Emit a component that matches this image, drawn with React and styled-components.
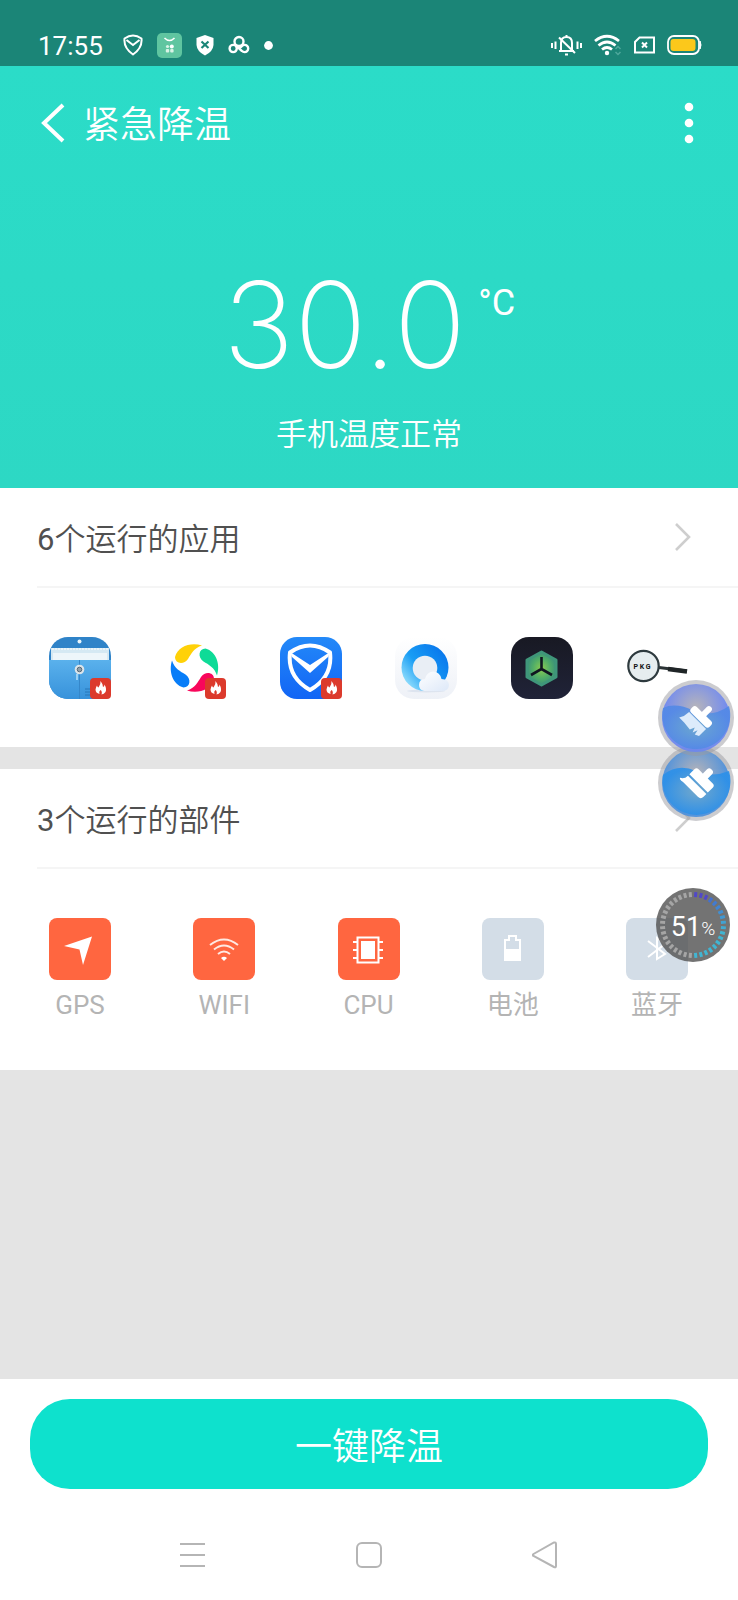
import React from 'react'
import styled, { createGlobalStyle } from 'styled-components'

const colors = {
  teal: '#2bdcc8',
  tealDark: '#2dd8c4',
  status: '#1b8577',
  action: '#0ee1cd',
  orange: '#ff6640',
  idle: '#d3dde7',
  page: '#e4e4e4',
  text: '#505050',
  muted: '#b4b4b4',
};

const GlobalStyle = createGlobalStyle`
  * {
    box-sizing: border-box;
  }

  body {
    margin: 0;
    font-family: Roboto, "Noto Sans CJK SC", sans-serif;
    background: ${colors.page};
  }

  button {
    border: 0;
    padding: 0;
    background: none;
    font-family: inherit;
    cursor: pointer;
  }

  svg {
    display: block;
    flex-shrink: 0;
  }
`;

// Styled components
const Page = styled.div`
  position: relative;
  min-height: 100vh;
  display: flex;
  flex-direction: column;
`;

const StatusBar = styled.div`
  height: 66px;
  padding: 24px 36px 0 38px;
  display: flex;
  align-items: center;
  justify-content: space-between;
  background: ${colors.status};
  color: #fff;
`;

const StatusGroup = styled.div`
  display: flex;
  align-items: center;
  gap: ${props => props.$gap || 12}px;
`;

const Clock = styled.span`
  padding-top: 2px;
  font-size: 26px;
  line-height: 32px;
  margin-right: 6px;
`;

const Hero = styled.header`
  height: 422px;
  display: flex;
  flex-direction: column;
  background: linear-gradient(${colors.teal}, ${colors.tealDark});
  color: #fff;
`;

const TitleBar = styled.div`
  height: 114px;
  padding: 0 40px 0 41px;
  display: flex;
  align-items: center;
  justify-content: space-between;
`;

const BackButton = styled.button`
  display: flex;
  align-items: center;
  gap: 18px;
  color: #fff;
`;

const Title = styled.h1`
  margin: 0;
  padding-top: 6px;
  font-size: 37px;
  line-height: 48px;
  font-weight: 350;
`;

const Reading = styled.div`
  margin-top: 73px;
  display: flex;
  justify-content: center;
  align-items: flex-start;
  gap: 12px;
`;

const Degrees = styled.span`
  font-family: Inter, Roboto, sans-serif;
  font-size: 120px;
  line-height: 144px;
  font-weight: 200;
`;

const Unit = styled.span`
  padding-top: 28px;
  font-size: 36px;
  line-height: 44px;
`;

const Summary = styled.p`
  margin: 18px 0 0;
  text-align: center;
  font-size: 31px;
  line-height: 40px;
  font-weight: 350;
`;

const Section = styled.section`
  background: #fff;
  margin-bottom: 22px;
`;

const SectionHeader = styled.button`
  width: calc(100% - 37px);
  height: 100px;
  margin-left: 37px;
  padding-right: 46px;
  display: flex;
  align-items: center;
  justify-content: space-between;
  border-bottom: 2px solid #f5f5f5;
  color: ${colors.text};
  font-size: 31px;
  font-weight: 350;
`;

const Count = styled.span`
  font-weight: 400;
`;

const SectionTitle = styled.span`
  padding-bottom: 2px;
`;

const IconRow = styled.div`
  display: flex;
  justify-content: space-between;
  padding: 49px 50px ${props => props.$bottom}px 49px;
`;

const AppButton = styled.button`
  position: relative;
  width: 62px;
  height: 62px;
`;

const HotBadge = styled.span`
  position: absolute;
  right: 0;
  bottom: 0;
  width: 21px;
  height: 21px;
  border-radius: 4px;
  background: #dc3a2c;
`;

const PartButton = styled.button`
  width: 62px;
  display: flex;
  flex-direction: column;
  align-items: center;
  gap: 7px;
  color: ${colors.muted};
  font-size: 26px;
  line-height: 36px;
  font-weight: 400;
  white-space: nowrap;
`;

const PartTile = styled.span`
  width: 62px;
  height: 62px;
  border-radius: 8px;
  background: ${props => (props.$active ? colors.orange : colors.idle)};
`;

const Footer = styled.footer`
  margin-top: auto;
  background: #fff;
`;

const ActionArea = styled.div`
  padding: 20px 30px;
`;

const ActionButton = styled.button`
  width: 100%;
  height: 90px;
  border-radius: 40px;
  background: ${colors.action};
  color: #fff;
  font-size: 37px;
  font-weight: 350;
`;

const NavBar = styled.nav`
  height: 91px;
  padding: 0 178px;
  display: flex;
  align-items: center;
  justify-content: space-between;
`;

const Floating = styled.button`
  position: absolute;
  top: ${props => props.$top}px;
  right: ${props => props.$right}px;
  border-radius: 50%;
`;

const Meter = styled(Floating)`
  width: 74px;
  height: 74px;
  padding-top: 3px;
  display: flex;
  align-items: center;
  justify-content: center;
  background: rgba(84, 84, 84, 0.82);
  color: #fff;
  font-size: 27px;
`;

const MeterRing = styled.svg`
  position: absolute;
  inset: 0;
`;

const Percent = styled.small`
  padding-top: 3px;
  font-size: 19px;
  font-weight: 300;
`;

// Status bar icons
const StatusLeft = () => (
  <StatusGroup $gap={14}>
    <Clock>17:55</Clock>
    <svg width="20" height="22" viewBox="0 0 20 22" fill="none" stroke="#fff" strokeWidth="2">
      <path d="M1.5 4.5Q10-1.5 18.5 4.5Q19.5 14 10 20.5Q.5 14 1.5 4.5Z" strokeLinejoin="round" />
      <path d="M3.5 6L10 11L16.5 6" />
    </svg>
    <svg width="25" height="25" viewBox="0 0 25 25">
      <rect width="25" height="25" rx="5" fill="#5fc5a0" />
      <path d="M7.500 5Q12.500 10 17.500 5" fill="none" stroke="#fff" strokeWidth="1.600" />
      <g fill="#d8f3e6">
        <circle cx="10.500" cy="13.500" r="1.600" />
        <circle cx="14.800" cy="13.500" r="2" fill="#fff" />
        <rect x="8.800" y="16" width="3.400" height="3.400" rx="1" />
        <rect x="13.200" y="16" width="3.400" height="3.400" rx="1" />
      </g>
    </svg>
    <svg width="18" height="22" viewBox="0 0 18 22">
      <path d="M9 1L17.500 4V11Q17 17.500 9 21.500Q1 17.500 .5 11V4Z" fill="#fff" />
      <path d="M5.500 7.500L12.500 14M12.500 7.500L5.500 14" stroke={colors.status} strokeWidth="2.200" />
    </svg>
    <svg width="22" height="20" viewBox="0 0 22 20" fill="none" stroke="#fff" strokeWidth="2.400">
      <circle cx="11" cy="6.500" r="4.500" />
      <circle cx="5.200" cy="13.500" r="3.600" />
      <path d="M8 10.500L14 16A3.600 3.600 0 1 0 14 11L11.500 13.500" />
    </svg>
    <svg width="9" height="9" viewBox="0 0 9 9">
      <circle cx="4.500" cy="4.500" r="4.400" fill="#fff" />
    </svg>
  </StatusGroup>
);

const StatusRight = () => (
  <StatusGroup>
    <svg width="31" height="22" viewBox="0 0 31 22" fill="none" stroke="#fff" strokeWidth="2">
      <path d="M1 9V14M4.500 7.500V15M26.500 7.500V15M30 9V14" />
      <path d="M8 17H23M10 17V9Q10 3 15.500 3Q21 3 21 9V17M15.500 1V3M14 20.500H17" />
      <path d="M8 3.500L24 19" />
    </svg>
    <svg width="28" height="22" viewBox="0 0 28 22" fill="none" stroke="#fff" strokeWidth="2.800">
      <path d="M1 7Q13-2.500 25 7" />
      <path d="M4.500 11.500Q13 4.500 21.500 11.500" />
      <path d="M8 15.500Q13 11.500 18 15.500" />
      <circle cx="13" cy="19" r="2.200" fill="#fff" stroke="none" />
      <path d="M21.500 15L24 12.500L26.500 15M21.500 18L24 20.500L26.500 18" stroke="#4ea79b" strokeWidth="1.500" />
    </svg>
    <svg width="21" height="18" viewBox="0 0 21 18" fill="none" stroke="#fff" strokeWidth="2">
      <path d="M5.500 1.500H20V16.500H1V6Z" />
      <path d="M8 6.500L13 11.500M13 6.500L8 11.500" />
    </svg>
    <svg width="35" height="20" viewBox="0 0 35 20">
      <rect x="1" y="1" width="31" height="18" rx="6" fill="none" stroke="#fff" strokeWidth="1.800" />
      <path d="M33 6Q35 10 33 14Z" fill="#fff" stroke="#fff" />
      <rect x="3.500" y="4" width="25" height="12" rx="3" fill="#fcc81b" />
    </svg>
  </StatusGroup>
);

const Chevron = () => (
  <svg width="18" height="30" viewBox="0 0 18 30" fill="none" stroke="#cecece" strokeWidth="2.600">
    <path d="M2 2L15 15L2 28" />
  </svg>
);

const Flame = () => (
  <svg width="21" height="21" viewBox="0 0 21 21">
    <path
      d="M10.500 3Q13 6 13 9Q14.500 8.500 14.500 6.500Q17 11 15.500 14Q14 16 11.500 16.500Q12.500 13.500 10.500 12Q8.500 13.500 9.500 16Q5.500 15 5.500 11.500Q6 9 7 7.500Q7.500 9.500 8.500 9.500Q11 6.500 10.500 3Z"
      fill="#fff"
    />
  </svg>
);

// App icons, all drawn on the same 62px tile
const FolderIcon = () => (
  <svg width="62" height="62" viewBox="0 0 62 62">
    <defs>
      <linearGradient id="folder" x2="0" y2="1">
        <stop stopColor="#5ab1ec" />
        <stop offset="1" stopColor="#3792db" />
      </linearGradient>
      <clipPath id="tile">
        <rect width="62" height="62" rx="19" />
      </clipPath>
    </defs>
    <g clipPath="url(#tile)">
      <rect width="62" height="62" fill="#2f83c8" />
      <rect x="2" y="11" width="58" height="20" fill="#d5e9f3" />
      <path d="M3 12H59" stroke="#fff" strokeDasharray="2 1" />
      <rect x="4" y="16" width="54" height="7" fill="#edf6fa" />
      <rect y="23" width="62" height="39" fill="url(#folder)" />
      <path d="M30.500 23V62" stroke="#3587ca" />
      <path d="M28 37V43" stroke="#9ad0f4" strokeWidth="2" />
      <path d="M36 52H44M36 55H44M36 58H44" stroke="#2676b8" />
    </g>
    <circle cx="30.500" cy="4.500" r="2" fill="#e8f5fc" />
    <circle cx="30.500" cy="32.500" r="4.800" fill="#dbe4ea" />
    <circle cx="30.500" cy="32.500" r="2.300" fill="#8fa0ac" stroke="#5a6a76" />
  </svg>
);

const swirls = ['#ffd108', '#0edb97', '#f8075b', '#087df8'];

const SwirlIcon = () => (
  <svg width="62" height="62" viewBox="0 0 62 62">
    {swirls.map((fill, i) => (
      <path
        key={fill}
        d="M38 8.500C27 5 14 9 11 20C11 27 20 28 24 22C27 17 30 11 38 8.500Z"
        fill={fill}
        transform={`rotate(${i * 90} 30.500 31)`}
      />
    ))}
  </svg>
);

const ShieldIcon = () => (
  <svg width="62" height="62" viewBox="0 0 62 62">
    <defs>
      <linearGradient id="shield" x2="0" y2="1">
        <stop stopColor="#2389f8" />
        <stop offset="1" stopColor="#1265f5" />
      </linearGradient>
    </defs>
    <rect width="62" height="62" rx="17" fill="url(#shield)" />
    <path
      d="M10 15.500Q30 1.500 50 15.500Q53 40 30 53Q7 40 10 15.500Z"
      fill="none"
      stroke="#fff"
      strokeWidth="4"
      strokeLinejoin="round"
    />
    <path d="M10 15L30 28L50 15L48 20L30 36L12 20Z" fill="#fff" />
  </svg>
);

const CloudIcon = () => (
  <svg width="62" height="62" viewBox="0 0 62 62">
    <defs>
      <linearGradient id="cloudTile" x2="0" y2="1">
        <stop stopColor="#fff" />
        <stop offset="1" stopColor="#eef1f7" />
      </linearGradient>
      <linearGradient id="ring" x1="1" y1=".2" x2=".15" y2=".9">
        <stop stopColor="#0874ec" />
        <stop offset=".6" stopColor="#199df4" />
        <stop offset="1" stopColor="#90ddfc" />
      </linearGradient>
      <linearGradient id="cloud" x2="1" y2="1">
        <stop stopColor="#fff" />
        <stop offset="1" stopColor="#dde8f8" />
      </linearGradient>
    </defs>
    <rect width="62" height="62" rx="19" fill="url(#cloudTile)" />
    <ellipse cx="31" cy="54" rx="19" ry="1.500" fill="#dde4ef" />
    <circle cx="30" cy="30.500" r="23.500" fill="url(#ring)" />
    <circle cx="30" cy="31" r="12.300" fill="#e9eef5" />
    <path
      d="M29 54Q24 53 24 48Q24 42 30 42Q32 34.500 38.500 34.500Q45 35 46.500 42Q53.500 42 54 48Q53.500 54 47 54Z"
      fill="url(#cloud)"
    />
  </svg>
);

const HexIcon = () => (
  <svg width="62" height="62" viewBox="0 0 62 62">
    <defs>
      <radialGradient id="hex">
        <stop stopColor="#8ccc50" />
        <stop offset=".6" stopColor="#50ad68" />
        <stop offset="1" stopColor="#3c9278" />
      </radialGradient>
      <linearGradient id="night" x2="0" y2="1">
        <stop stopColor="#181923" />
        <stop offset="1" stopColor="#202338" />
      </linearGradient>
    </defs>
    <rect width="62" height="62" rx="18" fill="url(#night)" />
    <path
      d="M30.500 15L45 23V40L30.500 48L16 40V23Z"
      fill="url(#hex)"
      stroke="#3f967a"
      strokeWidth="3"
      strokeLinejoin="round"
    />
    <path d="M30.500 20V32L20 38M30.500 32L41 38" fill="none" stroke="#101520" strokeWidth="2.600" />
  </svg>
);

const MagnifierIcon = () => (
  <svg width="62" height="62" viewBox="0 0 62 62">
    <path d="M33 30.500L61 34" stroke="#2c3436" strokeWidth="3" />
    <path d="M42 32L61 34.500" stroke="#1f2527" strokeWidth="4.500" />
    <circle cx="17.500" cy="29" r="15.200" fill="#e6edef" stroke="#2e3a3e" strokeWidth="2.200" />
    <text x="16" y="32" textAnchor="middle" fontSize="7" fontWeight="700" fontFamily="Roboto" fill="#111">
      P K G
    </text>
  </svg>
);

// Running parts
const GpsIcon = () => (
  <svg width="62" height="62" viewBox="0 0 62 62">
    <path d="M43 18.500L34 47L30.500 31.500L15 28Z" fill="#fff" />
  </svg>
);

const WifiIcon = () => (
  <svg width="62" height="62" viewBox="0 0 62 62" fill="none" stroke="#ffe9e2" strokeWidth="2">
    <path d="M17 27Q31 16 45 27" />
    <path d="M21 31.500Q31 23.500 41 31.500" />
    <path d="M25 36Q31 31 37 36" />
    <path d="M28 40Q31 37.500 34 40L31 43Z" fill="#fff" stroke="none" />
  </svg>
);

const CpuIcon = () => (
  <svg width="62" height="62" viewBox="0 0 62 62" fill="none" stroke="#fff" strokeWidth="2">
    <rect x="19.500" y="19.500" width="21" height="25" />
    <rect x="23" y="23" width="14" height="18" fill="#fff" stroke="none" />
    <path d="M15 24H20M15 32H20M15 40H20M40 24H45M40 32H45M40 40H45" />
  </svg>
);

const BatteryIcon = () => (
  <svg width="62" height="62" viewBox="0 0 62 62">
    <path d="M23 22H27V18H34V22H38V42H23Z" fill="none" stroke="#fff" strokeWidth="2" />
    <path d="M22 31H39V43H22Z" fill="#fff" />
  </svg>
);

const BluetoothIcon = () => (
  <svg width="62" height="62" viewBox="0 0 62 62" fill="none" stroke="#fff" strokeWidth="2">
    <path d="M22 23L39 36L31 41V20L39 26L22 39" />
  </svg>
);

const BrushBubble = ({ id, from, mid, to, solid }) => (
  <svg width="76" height="76" viewBox="0 0 76 76">
    <defs>
      <radialGradient id={`${id}Wave`} cy=".5">
        <stop stopColor={mid} />
        <stop offset="1" stopColor={to} />
      </radialGradient>
      <radialGradient id={`${id}Sky`} cy=".35" r=".45">
        <stop stopColor="#b4b2b8" />
        <stop offset="1" stopColor={from} />
      </radialGradient>
    </defs>
    <circle cx="38" cy="38" r="38" fill="#9a9a9f" opacity=".5" />
    <circle cx="38" cy="38" r="34" fill={`url(#${id}Sky)`} opacity=".9" />
    <path
      d={solid ? 'M5 30Q20 18 38 26Q54 33 71 26A34 34 0 1 1 5 30Z' : 'M5 28Q18 22 36 31Q54 38 71 26A34 34 0 1 1 5 28Z'}
      fill={`url(#${id}Wave)`}
      opacity=".92"
    />
    {solid ? (
      <g transform="translate(42 37) rotate(45)" fill="#fff">
        <rect x="-4" y="-17" width="7" height="14" rx="3" />
        <path d="M-10-8H10Q13-8 13-5V2H-13V-5Q-13-8-10-8Z" />
        <path d="M-13 4H13V8Q13 12 9 12H-12Q-17 13-17 11Q-13 9-13 4Z" />
      </g>
    ) : (
      <g transform="translate(41 39) rotate(45)">
        <rect x="-3" y="-17" width="6" height="14" rx="3" fill="#fff" />
        <rect x="-13" y="-7" width="26" height="8" rx="3" fill="#fff" />
        <path d="M-12 2H12V12L8 14L7 9L5 14L3 9L1 14L-8 13H-15Q-12 8-12 2Z" fill="#dcebfb" />
      </g>
    )}
  </svg>
);

const TICKS = 36;
const ring = Array.from({ length: TICKS }, (_, i) => {
  const angle = (i + 0.5) * (360 / TICKS);
  if (i >= TICKS / 2) return { angle, color: '#a5a5a5' };
  if (i < 3) return { angle, color: '#5148c8' };
  return { angle, color: `hsl(${Math.max(192, 232 - i * 4)} 62% 54%)` };
});

const apps = [
  { name: '文件管理', Icon: FolderIcon, hot: true },
  { name: '应用宝', Icon: SwirlIcon, hot: true },
  { name: '手机管家', Icon: ShieldIcon, hot: true },
  { name: '浏览器', Icon: CloudIcon },
  { name: '工具箱', Icon: HexIcon },
  { name: 'PKG', Icon: MagnifierIcon },
];

const parts = [
  { name: 'GPS', Icon: GpsIcon, active: true },
  { name: 'WIFI', Icon: WifiIcon, active: true },
  { name: 'CPU', Icon: CpuIcon, active: true },
  { name: '电池', Icon: BatteryIcon },
  { name: '蓝牙', Icon: BluetoothIcon },
];

// Main component
const App = () => {
  return (
    <Page>
      <GlobalStyle />
      <StatusBar>
        <StatusLeft />
        <StatusRight />
      </StatusBar>

      <Hero>
        <TitleBar>
          <BackButton>
            <svg width="24" height="40" viewBox="0 0 24 40" fill="none" stroke="#fff" strokeWidth="4">
              <path d="M22 2L3 20L22 38" />
            </svg>
            <Title>紧急降温</Title>
          </BackButton>
          <button aria-label="更多">
            <svg width="18" height="42" viewBox="0 0 18 42" fill="#fff">
              <circle cx="9" cy="5" r="4.300" />
              <circle cx="9" cy="21" r="4.300" />
              <circle cx="9" cy="37" r="4.300" />
            </svg>
          </button>
        </TitleBar>
        <Reading>
          <Degrees>30.0</Degrees>
          <Unit>°C</Unit>
        </Reading>
        <Summary>手机温度正常</Summary>
      </Hero>

      <Section>
        <SectionHeader>
          <SectionTitle><Count>{apps.length}</Count>个运行的应用</SectionTitle>
          <Chevron />
        </SectionHeader>
        <IconRow $bottom={48}>
          {apps.map(({ name, Icon, hot }) => (
            <AppButton key={name} aria-label={name}>
              <Icon />
              {hot && <HotBadge><Flame /></HotBadge>}
            </AppButton>
          ))}
        </IconRow>
      </Section>

      <Section>
        <SectionHeader>
          <SectionTitle><Count>{parts.filter(part => part.active).length}</Count>个运行的部件</SectionTitle>
          <Chevron />
        </SectionHeader>
        <IconRow $bottom={47}>
          {parts.map(({ name, Icon, active }) => (
            <PartButton key={name}>
              <PartTile $active={active}><Icon /></PartTile>
              {name}
            </PartButton>
          ))}
        </IconRow>
      </Section>

      <Footer>
        <ActionArea>
          <ActionButton>一键降温</ActionButton>
        </ActionArea>
        <NavBar>
          <button aria-label="菜单">
            <svg width="28" height="28" viewBox="0 0 28 28" stroke="#b5b5b5" strokeWidth="2">
              <path d="M2 3H27M2 14H27M2 25H27" />
            </svg>
          </button>
          <button aria-label="主页">
            <svg width="28" height="28" viewBox="0 0 28 28" fill="none" stroke="#b5b5b5" strokeWidth="2">
              <rect x="2" y="2" width="24" height="24" rx="5" />
            </svg>
          </button>
          <button aria-label="返回">
            <svg width="28" height="28" viewBox="0 0 28 28" fill="none" stroke="#b5b5b5" strokeWidth="2">
              <path d="M22 1.500Q24 1 24 3V25Q24 27 22 26L1.500 15Q0 14 1.500 13Z" />
            </svg>
          </button>
        </NavBar>
      </Footer>

      <Floating $top={745} $right={4} aria-label="清理">
        <BrushBubble id="lower" from="#4a8fdc" mid="#70a8cc" to="#2d90e8" solid />
      </Floating>
      <Floating $top={680} $right={4} aria-label="加速">
        <BrushBubble id="upper" from="#6c86f0" mid="#68a8cf" to="#5389e6" />
      </Floating>
      <Meter $top={888} $right={8}>
        <MeterRing viewBox="0 0 74 74">
          {ring.map(({ angle, color }) => (
            <path
              key={angle}
              d="M37 4V9"
              stroke={color}
              strokeWidth="3"
              transform={`rotate(${angle} 37 37)`}
            />
          ))}
        </MeterRing>
        51
        <Percent>%</Percent>
      </Meter>
    </Page>
  );
};

export default App;
